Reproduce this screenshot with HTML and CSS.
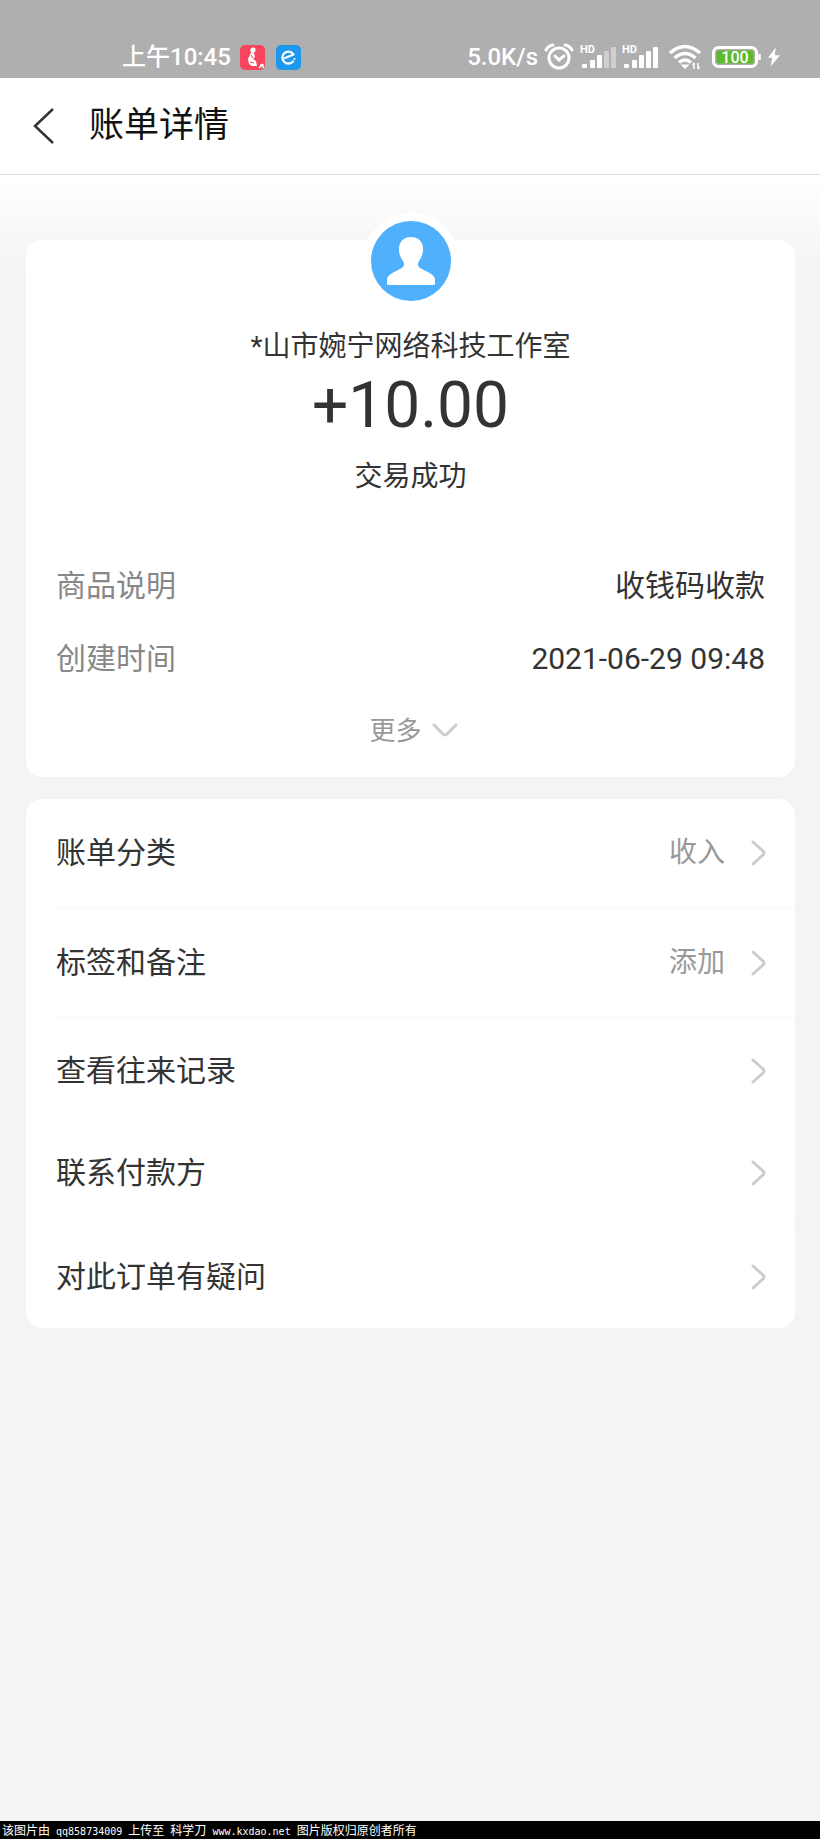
FILE: index.html
```
<!DOCTYPE html>
<html lang="zh-CN">
<head>
<meta charset="utf-8">
<meta name="viewport" content="width=device-width, initial-scale=1">
<title>账单详情</title>
<link rel="stylesheet" href="styles.css">
</head>
<body>
<div class="status">
  <div class="status-group">
    <span class="clock">上午10:45</span>
    <svg class="app" width="25" height="25" viewBox="0 0 25 25" aria-hidden="true"><rect width="25" height="25" rx="5" fill="#f6455c"/><circle cx="13" cy="5" r="2.6" fill="#fff"/><path d="M11 7l3 1 1 4-2 2 3 2 1 5h-5l-3-2-1-5 2-4z" fill="#fff"/><path d="M11 10l2 3M10 17l4 1" stroke="#f6455c"/><path d="M19 23l4-4M20 20h3v3" fill="none" stroke="#fff" stroke-width="1.5"/></svg>
    <svg class="app" width="25" height="25" viewBox="0 0 25 25" aria-hidden="true"><rect width="25" height="25" rx="5" fill="#1c98ee"/><path d="M9 13l8.500-3.500A6 6 0 1 0 17 16.500" fill="none" stroke="#fff" stroke-width="2.200" stroke-linecap="round" stroke-linejoin="round"/><circle cx="18.500" cy="14" r="1" fill="#fff"/></svg>
  </div>
  <div class="status-group status-right">
    <span class="speed">5.0K/s</span>
    <svg width="30" height="28" viewBox="0 0 30 28" fill="none" stroke="#fff" stroke-width="3" stroke-linecap="round" aria-hidden="true"><circle cx="15" cy="15" r="10"/><path d="M2 7q2-4 7-5M28 7q-2-4-7-5M11 13l4 4 5-4"/></svg>
    <svg class="signal" width="36" height="26" viewBox="0 0 36 26" aria-hidden="true"><text x="0" y="9" class="hd">HD</text><g fill="#fff"><rect x="2" y="20" width="5" height="4" rx="1"/><rect x="10" y="16" width="5" height="8" rx="1"/><rect x="17" y="11" width="5" height="13" rx="1"/><rect x="24" y="7" width="5" height="17" rx="1" opacity=".4"/><rect x="31" y="3" width="5" height="21" rx="1" opacity=".4"/></g></svg>
    <svg class="signal" width="36" height="26" viewBox="0 0 36 26" aria-hidden="true"><text x="0" y="9" class="hd">HD</text><g fill="#fff"><rect x="2" y="20" width="5" height="4" rx="1"/><rect x="10" y="16" width="5" height="8" rx="1"/><rect x="17" y="11" width="5" height="13" rx="1"/><rect x="24" y="7" width="5" height="17" rx="1"/><rect x="31" y="3" width="5" height="21" rx="1"/></g></svg>
    <svg class="wifi" width="34" height="26" viewBox="0 0 34 26" fill="none" stroke="#fff" stroke-width="3.500" aria-hidden="true"><path d="M2 9q15-13 30 0M6.500 14q10.500-9 21 0M11 18.500q6-5 12 0"/><path d="M12.500 20.500h9L17 25z" fill="#fff" stroke="none"/><path d="M26 19v6M24.500 21l1.500-2M30 19v6M31.500 23l-1.500 2" stroke-width="1.500"/></svg>
    <svg class="battery" width="50" height="24" viewBox="0 0 50 24" aria-hidden="true"><rect x="1.500" y="2.500" width="43" height="19" rx="5" fill="none" stroke="#fff" stroke-width="3"/><rect x="4.500" y="5.500" width="37" height="13" rx="2" fill="#5cba2c"/><text x="23" y="17.500" class="percent" text-anchor="middle">100</text><path d="M47.500 9v6" stroke="#fff" stroke-width="2.500"/></svg>
    <svg class="bolt" width="12" height="22" viewBox="0 0 14 22" aria-hidden="true"><path d="M9 0L0 12h5L3 22l11-13H8z" fill="#fff"/></svg>
  </div>
</div>
<header class="nav">
  <button class="back" type="button" aria-label="返回"><svg width="22" height="36" viewBox="0 0 22 36" fill="none" stroke="#333" stroke-width="2.500"><path d="M20 1L2 18l18 17"/></svg></button>
  <h1>账单详情</h1>
</header>
<main>
  <section class="card summary">
    <div class="avatar"><svg width="80" height="80" viewBox="0 0 80 80" aria-hidden="true"><circle cx="40" cy="40" r="40" fill="#4fb0fd"/><path d="M40 16c-8 0-12 5-12 12 0 6 2 9 4 12 2 4 1 6-3 8-8 4-13 6-13 11v4q0 1 2 1h44q2 0 2-1v-4c0-5-5-7-13-11-4-2-5-4-3-8 2-3 4-6 4-12 0-7-4-12-12-12z" fill="#fff"/></svg></div>
    <p class="name">*山市婉宁网络科技工作室</p>
    <p class="amount">+10.00</p>
    <p class="state">交易成功</p>
    <dl class="details">
      <div class="detail"><dt>商品说明</dt><dd>收钱码收款</dd></div>
      <div class="detail"><dt>创建时间</dt><dd>2021-06-29 09:48</dd></div>
    </dl>
    <button class="more" type="button">更多<svg width="26" height="16" viewBox="0 0 26 16" fill="none" stroke="#ccc" stroke-width="3" stroke-linecap="round"><path d="M2 2l9 9q2 2 4 0l9-9"/></svg></button>
  </section>
  <nav class="card menu">
    <button class="row tall line" type="button"><span>账单分类</span><span class="value">收入</span><svg class="arrow" viewBox="0 0 15 26"><path d="M2 2l10 9q2 2 0 4L2 24"/></svg></button>
    <button class="row tall line" type="button"><span>标签和备注</span><span class="value">添加</span><svg class="arrow" viewBox="0 0 15 26"><path d="M2 2l10 9q2 2 0 4L2 24"/></svg></button>
    <button class="row" type="button"><span>查看往来记录</span><svg class="arrow" viewBox="0 0 15 26"><path d="M2 2l10 9q2 2 0 4L2 24"/></svg></button>
    <button class="row line" type="button"><span>联系付款方</span><svg class="arrow" viewBox="0 0 15 26"><path d="M2 2l10 9q2 2 0 4L2 24"/></svg></button>
    <button class="row" type="button"><span>对此订单有疑问</span><svg class="arrow" viewBox="0 0 15 26"><path d="M2 2l10 9q2 2 0 4L2 24"/></svg></button>
  </nav>
</main>
<footer class="credit">该图片由<span class="mono"> qq858734009 </span>上传至<span class="mono"> </span>科学刀<span class="mono"> www.kxdao.net </span>图片版权归原创者所有</footer>
</body>
</html>
```
FILE: styles.css
```
* { box-sizing: border-box; }
body {
  margin: 0;
  min-height: 100vh;
  display: flex;
  flex-direction: column;
  background: #f4f4f4;
  color: #333;
  font-family: Roboto, "Noto Sans CJK SC", sans-serif;
}
h1, p, dl, dd { margin: 0; }
button {
  border: 0;
  padding: 0;
  background: none;
  color: inherit;
  font: inherit;
  cursor: pointer;
}
svg { display: block; flex: none; }

.status {
  display: flex;
  justify-content: space-between;
  height: 78px;
  padding: 42px 40px 6px 122px;
  background: #afafaf;
  color: #fff;
  font-size: 24px;
  font-weight: 500;
  line-height: 30px;
}
.status-group { display: flex; align-items: center; }
.app { margin-left: 9px; }
.app + .app { margin-left: 11px; }
.status-right { gap: 6px; }
.wifi { margin-left: 4px; }
.battery { margin-left: 4px; }
.hd { font: 700 11px Roboto, sans-serif; fill: #fff; }
.percent { font: 500 16px Roboto, sans-serif; fill: #fff; }

.nav {
  display: flex;
  align-items: center;
  gap: 34px;
  height: 97px;
  padding: 0 33px;
  background: #fff;
  border-bottom: 1px solid #ddd;
}
h1 {
  color: #111;
  font-size: 35px;
  font-weight: 400;
  line-height: 48px;
}

main {
  display: flex;
  flex-direction: column;
  gap: 22px;
  padding: 65px 25px 40px 26px;
  background: linear-gradient(#fff, #f4f4f4 96px);
}
.card { background: #fff; border-radius: 16px; }
.summary {
  display: flex;
  flex-direction: column;
  align-items: center;
  padding-bottom: 26px;
}
.avatar {
  margin-top: -27px;
  padding: 8px;
  border-radius: 50%;
  background: #fff;
}
.name { margin-top: 18px; font-size: 28px; line-height: 40px; }
.amount { font-size: 64px; line-height: 78px; }
.state { margin-top: 12px; font-size: 28px; line-height: 40px; }
.details { align-self: stretch; margin-top: 52px; padding: 0 30px; }
.detail {
  display: flex;
  justify-content: space-between;
  height: 73px;
  font-size: 30px;
  line-height: 73px;
}
dt { color: #888; }
.more {
  display: flex;
  align-items: center;
  gap: 10px;
  margin-top: 16px;
  padding-left: 6px;
  color: #999;
  font-size: 26px;
  line-height: 40px;
}

.menu { padding-left: 30px; }
.row {
  display: flex;
  align-items: center;
  width: 100%;
  height: 103px;
  padding-right: 29px;
  font-size: 30px;
  line-height: 40px;
}
.tall { height: 110px; }
.line { border-bottom: 2px solid #fbfbfb; }
.value { margin-left: auto; color: #999; font-size: 28px; }
.arrow {
  width: 15px;
  height: 26px;
  margin-left: auto;
  fill: none;
  stroke: #ccc;
  stroke-width: 3;
  stroke-linecap: round;
}
.value + .arrow { margin-left: 26px; }

.credit {
  height: 18px;
  margin-top: auto;
  padding-left: 2px;
  background: #000;
  color: #fff;
  font-family: "Noto Sans CJK SC", sans-serif;
  font-size: 12px;
  line-height: 18px;
  white-space: nowrap;
  overflow: hidden;
}
.mono { font-family: "DejaVu Sans Mono", monospace; font-size: 10px; white-space: pre; }
```
